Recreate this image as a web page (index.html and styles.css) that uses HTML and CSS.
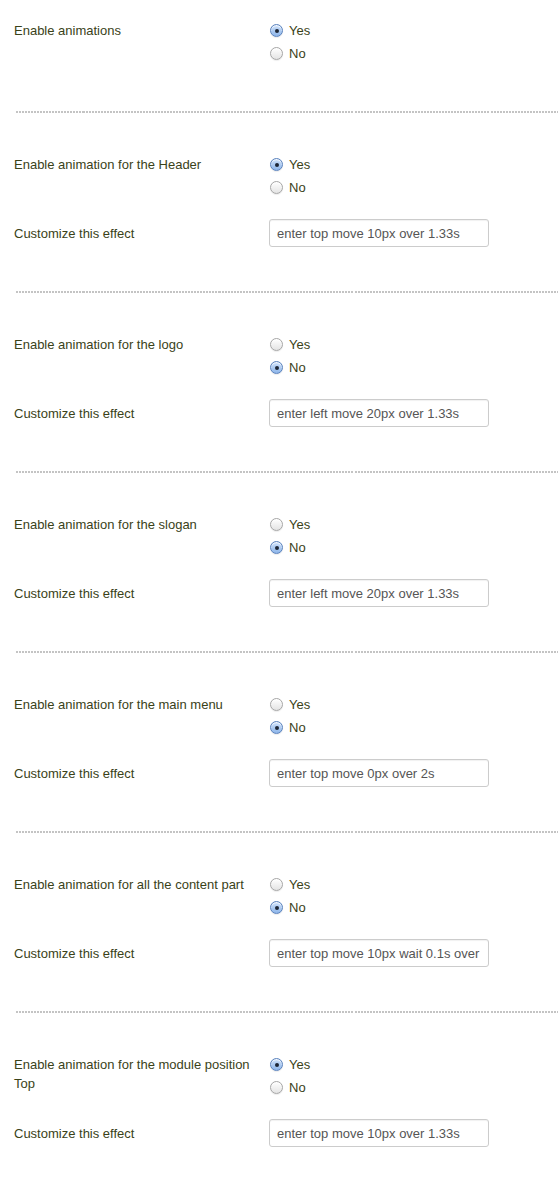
FILE: index.html
```html
<!DOCTYPE html>
<html lang="en">
<head>
  <meta charset="UTF-8" />
  <meta name="viewport" content="width=device-width, initial-scale=1" />
  <title>Animation settings</title>
  <link rel="stylesheet" href="styles.css">
</head>
<body>

  <div class="settings">

    <div class="section first">
      <div class="field">
        <div class="label">Enable animations</div>
        <div class="radios">
          <label class="option"><span class="radio checked"></span>Yes</label>
          <label class="option"><span class="radio"></span>No</label>
        </div>
      </div>
    </div>

    <div class="section">
      <div class="field">
        <div class="label">Enable animation for the Header</div>
        <div class="radios">
          <label class="option"><span class="radio checked"></span>Yes</label>
          <label class="option"><span class="radio"></span>No</label>
        </div>
      </div>
      <div class="field text-field">
        <div class="label">Customize this effect</div>
        <input type="text" value="enter top move 10px over 1.33s" />
      </div>
    </div>

    <div class="section">
      <div class="field">
        <div class="label">Enable animation for the logo</div>
        <div class="radios">
          <label class="option"><span class="radio"></span>Yes</label>
          <label class="option"><span class="radio checked"></span>No</label>
        </div>
      </div>
      <div class="field text-field">
        <div class="label">Customize this effect</div>
        <input type="text" value="enter left move 20px over 1.33s" />
      </div>
    </div>

    <div class="section">
      <div class="field">
        <div class="label">Enable animation for the slogan</div>
        <div class="radios">
          <label class="option"><span class="radio"></span>Yes</label>
          <label class="option"><span class="radio checked"></span>No</label>
        </div>
      </div>
      <div class="field text-field">
        <div class="label">Customize this effect</div>
        <input type="text" value="enter left move 20px over 1.33s" />
      </div>
    </div>

    <div class="section">
      <div class="field">
        <div class="label">Enable animation for the main menu</div>
        <div class="radios">
          <label class="option"><span class="radio"></span>Yes</label>
          <label class="option"><span class="radio checked"></span>No</label>
        </div>
      </div>
      <div class="field text-field">
        <div class="label">Customize this effect</div>
        <input type="text" value="enter top move 0px over 2s" />
      </div>
    </div>

    <div class="section">
      <div class="field">
        <div class="label">Enable animation for all the content part</div>
        <div class="radios">
          <label class="option"><span class="radio"></span>Yes</label>
          <label class="option"><span class="radio checked"></span>No</label>
        </div>
      </div>
      <div class="field text-field">
        <div class="label">Customize this effect</div>
        <input type="text" value="enter top move 10px wait 0.1s over 1.33s" />
      </div>
    </div>

    <div class="section last">
      <div class="field">
        <div class="label">Enable animation for the module position Top</div>
        <div class="radios">
          <label class="option"><span class="radio checked"></span>Yes</label>
          <label class="option"><span class="radio"></span>No</label>
        </div>
      </div>
      <div class="field text-field">
        <div class="label">Customize this effect</div>
        <input type="text" value="enter top move 10px over 1.33s" />
      </div>
    </div>

  </div>

</body>
</html>
```

FILE: styles.css
```css
* { box-sizing: border-box; }

body {
  margin: 0;
  padding: 0;
  background: #fff;
  font-family: "Liberation Sans", Arial, Helvetica, sans-serif;
  font-size: 13px;
  color: #3a4219;
  overflow: hidden;
}

.settings {
  padding-left: 14px;
}

.section {
  padding: 40px 0 24px;
  border-bottom: 2px solid transparent;
  border-image: repeating-linear-gradient(90deg, #c4c4c4 0 2px, transparent 2px 3px) 2;
  margin-left: 1px;
}

.section.first {
  padding-top: 19px;
  padding-bottom: 26px;
}

.section.last {
  border-bottom: none;
}

.field {
  display: flex;
  align-items: flex-start;
  margin-bottom: 20px;
  margin-left: -1px;
}

.text-field {
  align-items: center;
}

.label {
  width: 255px;
  flex-shrink: 0;
  padding-top: 2px;
  padding-right: 12px;
  line-height: 19px;
}

.text-field .label {
  padding-top: 0;
}

.radios {
  display: flex;
  flex-direction: column;
}

.option {
  display: flex;
  align-items: center;
  height: 23px;
  padding-left: 1px;
}

.radio {
  width: 13px;
  height: 13px;
  margin-right: 6px;
  border-radius: 50%;
  border: 1px solid #a6a6a6;
  background: linear-gradient(#ffffff, #e4e4e4);
  box-shadow: inset 0 1px 1px rgba(255, 255, 255, 0.9), 0 1px 1px rgba(0, 0, 0, 0.08);
  display: flex;
  align-items: center;
  justify-content: center;
}

.radio.checked {
  border-color: #5a82bd;
  background: linear-gradient(#cfe2fb, #8eb6ea);
}

.radio.checked::after {
  content: "";
  width: 4px;
  height: 4px;
  border-radius: 50%;
  background: #1d2636;
}

input {
  width: 220px;
  height: 28px;
  padding: 0 7px;
  border: 1px solid #cccccc;
  border-radius: 3px;
  box-shadow: inset 0 1px 1px rgba(0, 0, 0, 0.06);
  font-family: "Liberation Sans", Arial, Helvetica, sans-serif;
  font-size: 13px;
  color: #555;
  outline: none;
}
```
